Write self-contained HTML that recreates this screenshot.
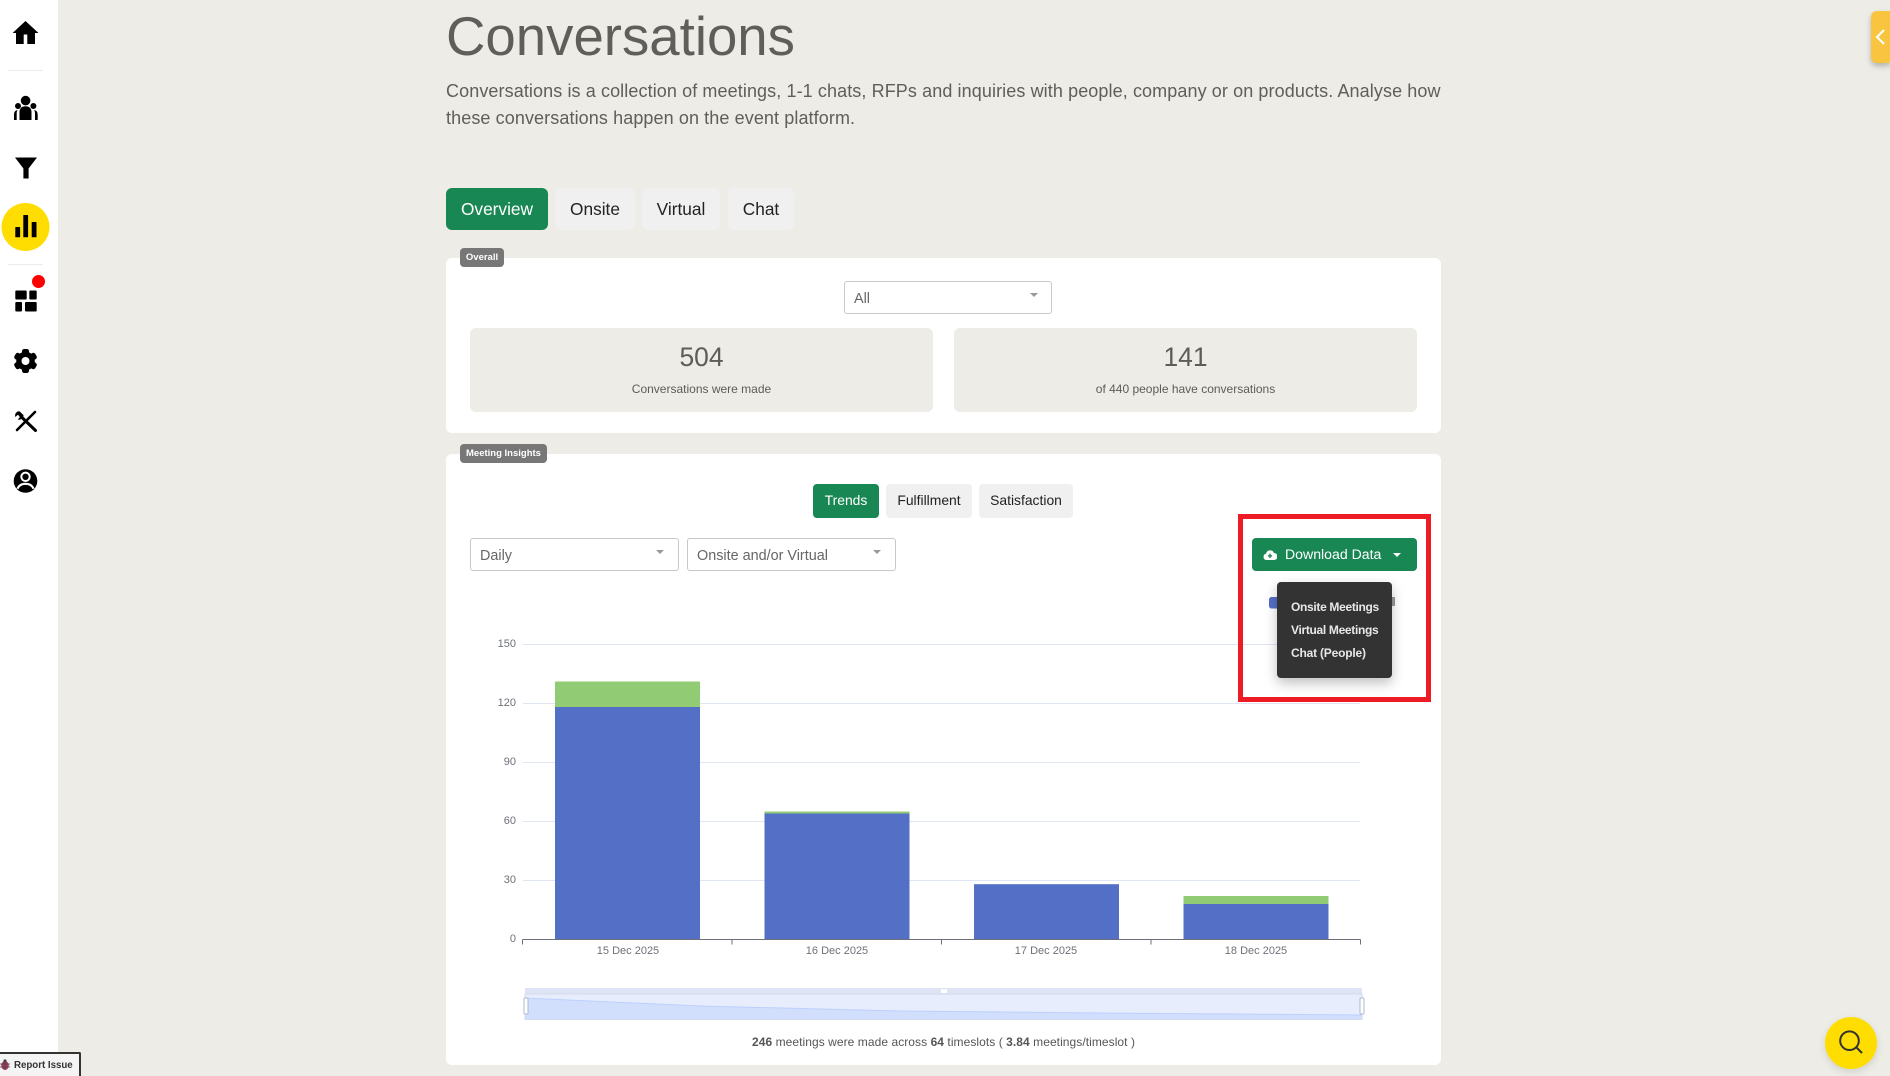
<!DOCTYPE html>
<html lang="en"><head><meta charset="utf-8"><title>Conversations</title>
<style>
html,body{margin:0;padding:0;width:1890px;height:1076px;overflow:hidden;background:#edece7;font-family:"Liberation Sans",sans-serif;color:#5c5c58}
.a{position:absolute;box-sizing:border-box}
.t{position:absolute;white-space:nowrap}
.side{left:0;top:0;width:58px;height:1076px;background:#fff}
.tab{display:flex;align-items:center;justify-content:center;background:#f0f0f0;color:#222;border-radius:6px}
.card{background:#fff;border-radius:6px}
.badge{background:#777;color:#fff;border-radius:4px;font-size:9.500px;font-weight:bold;display:flex;align-items:center;justify-content:center}
.sel{background:#fff;border:1px solid #c8c8c8;border-radius:3px;font-size:14.400px;color:#666;line-height:34px;padding-left:9px}
.sel i{position:absolute;width:0;height:0;border-left:4px solid transparent;border-right:4px solid transparent;border-top:4px solid #999;top:11px}
.stat{background:#edece7;border-radius:6px}
.ax{font-size:11px;fill:#6e7079;font-family:"Liberation Sans",sans-serif}
</style></head><body>
<div class="a side"></div>
<svg class="a" style="left:0;top:0" width="60" height="520" viewBox="0 0 60 520">
<path d="M25.500 21 L38.500 33 H35 V44 H27.300 V34.500 H23.700 V44 H16 V33 H12.600 Z" fill="#000"/>
<rect x="8" y="70" width="35" height="1" fill="#ecebe6"/>
<circle cx="25.600" cy="100.600" r="4.800"/><circle cx="18" cy="106" r="3"/><circle cx="33.400" cy="106" r="3"/>
<path d="M19.500 120V112c0-4 2.500-5.800 6-5.800s6 1.800 6 5.800v8z"/>
<path d="M14 120v-5c0-3 1-4.500 3.600-5-.6 1-.9 2-.9 3.500V120zM37.700 120v-5c0-3-1-4.500-3.600-5 .6 1 .9 2 .9 3.500V120z"/>
<path d="M15 157.500H37L28.600 168.500V178.500H23.400V168.500Z"/>
<circle cx="25.500" cy="227" r="24" fill="#ffdd00"/>
<rect x="15.300" y="227" width="4.800" height="10.300" rx=".6"/><rect x="23.300" y="215" width="4.800" height="22.300" rx=".6"/><rect x="31.700" y="222" width="4.800" height="15.300" rx=".6"/>
<rect x="8" y="264" width="35" height="1" fill="#ecebe6"/>
<circle cx="38.500" cy="281.500" r="6.500" fill="#ff0000"/>
<rect x="15.300" y="290.500" width="11.400" height="9" rx="1"/><rect x="29.300" y="290.500" width="7.400" height="9" rx="1"/><rect x="15.300" y="302" width="6.700" height="9.500" rx="1"/><rect x="25" y="302" width="11.700" height="9.500" rx="1"/>
<circle cx="25.500" cy="361" r="9.300"/>
<g>
<rect x="22" y="349" width="7" height="24" rx="2.200"/>
<rect x="22" y="349" width="7" height="24" rx="2.200" transform="rotate(60 25.500 361)"/>
<rect x="22" y="349" width="7" height="24" rx="2.200" transform="rotate(120 25.500 361)"/>
</g>
<circle cx="25.500" cy="361" r="4" fill="#fff"/>
<path d="M17 430 35 412" stroke="#000" stroke-width="2.600" stroke-linecap="round"/>
<path d="M21 416.500 35.500 430.500" stroke="#000" stroke-width="3" stroke-linecap="round"/>
<path d="M19.500 411.200a4.400 4.400 0 0 0-4.200 5.800l2.600-2.200 2.200 2.200-2.300 2.500a4.400 4.400 0 0 0 5.700-4.400z"/>
<circle cx="25.500" cy="481" r="11.800"/><circle cx="25.500" cy="476.800" r="4.200" fill="#000" stroke="#fff" stroke-width="2"/>
<path d="M17.500 488.800C19 484.800 22 483.800 25.500 483.800S32 484.800 33.500 488.800" fill="none" stroke="#fff" stroke-width="2.200"/>
</svg>

<div class="t" style="left:446px;top:4px;font-size:54.600px;line-height:66px;color:#5f5e5a">Conversations</div>
<div class="a" style="left:446px;top:78px;width:1010px;font-size:18px;line-height:27px;color:#5f5e5a;letter-spacing:.1px">Conversations is a collection of meetings, 1-1 chats, RFPs and inquiries with people, company or on products. Analyse how these conversations happen on the event platform.</div>

<div class="a tab" style="left:446px;top:188px;width:102px;height:42px;background:#198754;color:#fff;font-size:17.300px">Overview</div>
<div class="a tab" style="left:555px;top:188px;width:80px;height:42px;font-size:17.300px">Onsite</div>
<div class="a tab" style="left:642px;top:188px;width:78px;height:42px;font-size:17.300px">Virtual</div>
<div class="a tab" style="left:728px;top:188px;width:66px;height:42px;font-size:17.300px">Chat</div>

<div class="a card" style="left:446px;top:258px;width:995px;height:175px"></div>
<div class="a badge" style="left:460px;top:248px;width:44px;height:19px">Overall</div>
<div class="a sel" style="left:844px;top:281px;width:208px;height:33px">All<i style="left:185px"></i></div>
<div class="a stat" style="left:470px;top:328px;width:463px;height:84px"></div>
<div class="a stat" style="left:954px;top:328px;width:463px;height:84px"></div>
<div class="t" style="left:470px;width:463px;top:341px;text-align:center;font-size:26.400px;line-height:32px">504</div>
<div class="t" style="left:954px;width:463px;top:341px;text-align:center;font-size:26.400px;line-height:32px">141</div>
<div class="t" style="left:470px;width:463px;top:381px;text-align:center;font-size:12px;line-height:16px">Conversations were made</div>
<div class="t" style="left:954px;width:463px;top:381px;text-align:center;font-size:12px;line-height:16px">of 440 people have conversations</div>

<div class="a card" style="left:446px;top:454px;width:995px;height:611px"></div>
<div class="a badge" style="left:460px;top:444px;width:87px;height:19px">Meeting Insights</div>

<div class="a tab" style="left:813px;top:484px;width:66px;height:34px;padding-bottom:2px;background:#198754;color:#fff;font-size:13.900px;border-radius:4px">Trends</div>
<div class="a tab" style="left:886px;top:484px;width:86px;height:34px;padding-bottom:2px;font-size:13.900px;border-radius:4px">Fulfillment</div>
<div class="a tab" style="left:979px;top:484px;width:94px;height:34px;padding-bottom:2px;font-size:13.900px;border-radius:4px">Satisfaction</div>

<div class="a sel" style="left:470px;top:538px;width:209px;height:33px">Daily<i style="left:185px"></i></div>
<div class="a sel" style="left:687px;top:538px;width:209px;height:33px">Onsite and/or Virtual<i style="left:185px"></i></div>

<svg class="a" style="left:0;top:0" width="1890" height="1076" viewBox="0 0 1890 1076">
<g stroke="#e0e6f1" stroke-width="1" fill="none">
<path d="M523 644.500H1360M523 703.500H1360M523 762.500H1360M523 821.500H1360M523 880.500H1360"/>
</g>
<g text-anchor="end" class="ax">
<text x="516" y="647">150</text><text x="516" y="706">120</text><text x="516" y="765">90</text><text x="516" y="824">60</text><text x="516" y="883">30</text><text x="516" y="942">0</text>
</g>
<rect x="555" y="707" width="145" height="232.500" fill="#5470c6"/><rect x="555" y="681.500" width="145" height="25.500" fill="#91cc75"/>
<rect x="764.500" y="813.500" width="145" height="126" fill="#5470c6"/><rect x="764.500" y="811.500" width="145" height="2" fill="#91cc75"/>
<rect x="974" y="884.200" width="145" height="55.300" fill="#5470c6"/>
<rect x="1183.500" y="904" width="145" height="35.500" fill="#5470c6"/><rect x="1183.500" y="896" width="145" height="8" fill="#91cc75"/>
<path d="M522.500 939.500H1360.500M522.500 939.500v5M732 939.500v5M941.500 939.500v5M1151 939.500v5M1360.500 939.500v5" stroke="#6e7079" fill="none"/>
<g text-anchor="middle" class="ax">
<text x="628" y="954">15 Dec 2025</text><text x="837" y="954">16 Dec 2025</text><text x="1046" y="954">17 Dec 2025</text><text x="1256" y="954">18 Dec 2025</text>
</g>
<rect x="525" y="988" width="837" height="6" fill="#dee4f3"/>
<rect x="525" y="994" width="837" height="25.500" fill="#e7edfc"/>
<path d="M525 998 L700 1006 L900 1011 L1100 1013 L1362 1015 V1019.500 H525Z" fill="#d2dffc"/>
<path d="M525 998 L700 1006 L900 1011 L1100 1013 L1362 1015" fill="none" stroke="#bcd0fb"/>
<rect x="525" y="994" width="837" height="25.500" fill="none" stroke="#d2dbee"/>
<rect x="941" y="989.500" width="6" height="3.500" fill="#fff"/>
<rect x="524" y="998" width="4" height="16" rx="1" fill="#fff" stroke="#acb8d1"/>
<rect x="1360" y="998" width="4" height="16" rx="1" fill="#fff" stroke="#acb8d1"/>
<rect x="1269" y="597" width="11" height="11.500" rx="2.500" fill="#5470c6"/>
<rect x="1392" y="597" width="3" height="9" fill="#999"/>
</svg>

<div class="t" style="left:752px;top:1034px;font-size:12px;line-height:16px;color:#555;letter-spacing:.06px"><b>246</b> meetings were made across <b>64</b> timeslots ( <b>3.84</b> meetings/timeslot )</div>

<div class="a" style="left:1252px;top:538px;width:165px;height:33px;background:#198754;border-radius:4px"></div>
<svg class="a" style="left:1263px;top:548px" width="14" height="14" viewBox="0 0 14 14"><path d="M3.500 12A3.200 3.200 0 0 1 3 5.700 4.200 4.200 0 0 1 11 5a3.500 3.500 0 0 1 0 7z" fill="#fff"/><path d="M7 5.500v4.500M4.900 7.800H9.100" stroke="#198754" stroke-width="1.300"/></svg>
<div class="t" style="left:1285px;top:546px;font-size:14.100px;line-height:17px;color:#fff">Download Data</div>
<div class="a" style="left:1393px;top:553px;width:0;height:0;border-left:4.500px solid transparent;border-right:4.500px solid transparent;border-top:4.500px solid #fff"></div>

<div class="a" style="left:1277px;top:582px;width:115px;height:96px;background:#333;border-radius:4px;box-shadow:0 5px 12px rgba(0,0,0,.25)"></div>
<div class="t" style="left:1291px;top:599px;font-size:12px;line-height:16px;color:#e8e8e8;font-weight:bold;letter-spacing:-.32px">Onsite Meetings</div>
<div class="t" style="left:1291px;top:622px;font-size:12px;line-height:16px;color:#e8e8e8;font-weight:bold;letter-spacing:-.32px">Virtual Meetings</div>
<div class="t" style="left:1291px;top:645px;font-size:12px;line-height:16px;color:#e8e8e8;font-weight:bold;letter-spacing:-.2px">Chat (People)</div>

<div class="a" style="left:1238px;top:514px;width:193px;height:188px;border:5px solid #ed1c24"></div>

<div class="a" style="left:-6px;top:1052px;width:87px;height:24px;background:#f4f4f4;border:2px solid #333;border-bottom:0;border-radius:2px 2px 0 0"></div>
<div class="t" style="left:14px;top:1059px;font-size:9.700px;line-height:14px;font-weight:bold;color:#333">Report Issue</div>
<svg class="a" style="left:0;top:1059px" width="11" height="12" viewBox="0 0 11 12"><ellipse cx="5" cy="6.500" rx="3.800" ry="4.500" fill="#a83a5c"/><circle cx="5" cy="2" r="1.600" fill="#444"/><path d="M0 5h10M0 8h10M5 2v9" stroke="#444" stroke-width=".7"/></svg>

<div class="a" style="left:1871px;top:11px;width:19px;height:52px;background:#f9c440;border-radius:6px 0 0 6px;box-shadow:0 3px 6px rgba(0,0,0,.25)"></div>
<svg class="a" style="left:1874px;top:28px" width="14" height="18" viewBox="0 0 14 18"><path d="M10 2 3 9l7 7" fill="none" stroke="#fff" stroke-width="2"/></svg>

<div class="a" style="left:1825px;top:1017px;width:52px;height:52px;border-radius:50%;background:#ffdd00;box-shadow:0 3px 8px rgba(0,0,0,.12)"></div>
<svg class="a" style="left:1836px;top:1026px" width="30" height="30" viewBox="0 0 30 30"><circle cx="13.500" cy="14.700" r="9.300" fill="none" stroke="#333" stroke-width="2"/><path d="M20.500 21.500 26 27" stroke="#333" stroke-width="2"/></svg>
</body></html>
